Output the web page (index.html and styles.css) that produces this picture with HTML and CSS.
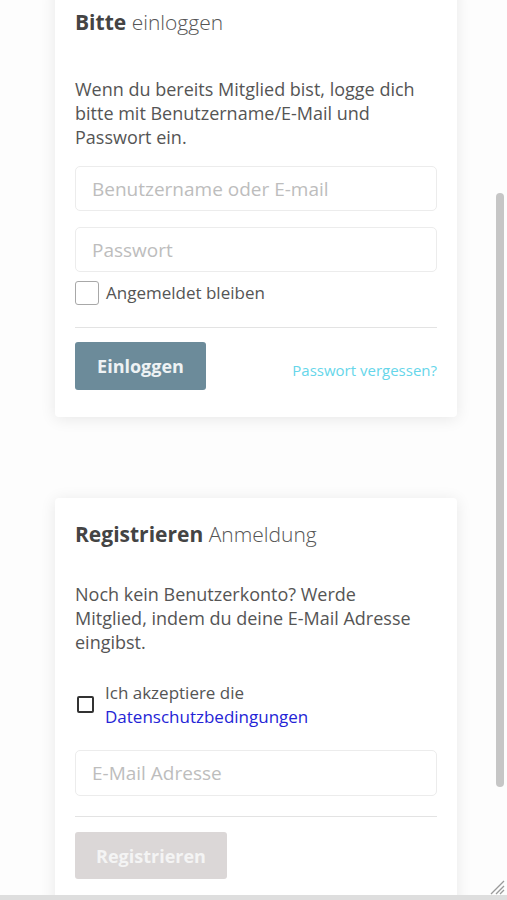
FILE: index.html
```html
<!DOCTYPE html>
<html lang="de">
<head>
<meta charset="utf-8">
<title>Login</title>
<link rel="stylesheet" href="styles.css">
</head>
<body>
<main class="page">
  <section class="card card-login">
    <h2 class="card-title"><strong>Bitte</strong> einloggen</h2>
    <p class="card-text">Wenn du bereits Mitglied bist, logge dich bitte mit Benutzername/E-Mail und Passwort ein.</p>
    <input class="field" type="text" placeholder="Benutzername oder E-mail">
    <input class="field" type="password" placeholder="Passwort">
    <label class="remember">
      <span class="box"></span>
      <span>Angemeldet bleiben</span>
    </label>
    <hr class="divider">
    <div class="actions">
      <button class="btn btn-primary" type="button">Einloggen</button>
      <a class="forgot" href="#">Passwort vergessen?</a>
    </div>
  </section>

  <section class="card card-register">
    <h2 class="card-title"><strong>Registrieren</strong> Anmeldung</h2>
    <p class="card-text text-register">Noch kein Benutzerkonto? Werde Mitglied, indem du deine E-Mail Adresse eingibst.</p>
    <label class="accept">
      <span class="box-small"></span>
      <span class="accept-text">Ich akzeptiere die<br><a href="#" class="privacy">Datenschutzbedingungen</a></span>
    </label>
    <input class="field field-email" type="email" placeholder="E-Mail Adresse">
    <hr class="divider divider-register">
    <button class="btn btn-disabled" type="button">Registrieren</button>
  </section>
</main>

<div class="scroll-thumb"></div>
<svg class="resize" width="18" height="18" viewBox="0 0 18 18">
  <path d="M17 4 L4 17 M17 9 L9 17 M17 13 L13 17" stroke="#9a9a9a" stroke-width="1.3" fill="none"/>
</svg>
<div class="bottom-strip"></div>
</body>
</html>
```

FILE: styles.css
```css
html, body {
  margin: 0;
  padding: 0;
  height: 100%;
  overflow: hidden;
}

body {
  background: #fdfdfd;
  font-family: "Open Sans", "Liberation Sans", sans-serif;
  color: #555;
}

.page {
  display: flex;
  flex-direction: column;
  padding-left: 55px;
  width: 402px;
}

.card {
  background: #fff;
  border-radius: 4px;
  box-shadow: 0 2px 16px rgba(0, 0, 0, 0.09);
  padding: 22px 20px 27px 20px;
  display: flex;
  flex-direction: column;
}

.card-login {
  margin-top: -14px;
}

.card-register {
  margin-top: 81px;
  padding-bottom: 40px;
}

.card-title {
  margin: 0;
  font-size: 21px;
  line-height: 28px;
  font-weight: 300;
  color: #555;
}

.card-title strong {
  font-weight: 700;
  color: #444;
}

.card-text {
  margin: 41px 0 0 0;
  font-size: 18px;
  line-height: 24px;
  color: #555;
}

.text-register {
  margin-top: 34px;
  max-width: 340px;
}

.field {
  box-sizing: border-box;
  height: 45px;
  margin-top: 17px;
  width: 100%;
  border: 1px solid #ececec;
  border-radius: 5px;
  padding: 0 16px;
  font-family: inherit;
  font-size: 19px;
  color: #555;
  background: #fff;
  outline: none;
}

.field + .field {
  margin-top: 16px;
}

.field::placeholder {
  color: #bdbdbd;
}

.remember {
  display: flex;
  align-items: center;
  gap: 7px;
  margin-top: 9px;
  font-size: 17px;
  line-height: 24px;
  color: #555;
}

.box {
  box-sizing: border-box;
  width: 24px;
  height: 24px;
  border: 1.5px solid #a8a8a8;
  border-radius: 3px;
  background: #fff;
}

.divider {
  border: 0;
  border-top: 1px solid #e3e3e3;
  margin: 22px 0 0 0;
}

.actions {
  display: flex;
  justify-content: space-between;
  align-items: center;
  margin-top: 14px;
}

.btn {
  border: 0;
  border-radius: 3px;
  font-family: inherit;
  font-weight: 700;
  font-size: 18px;
  height: 48px;
  padding: 0 10px;
  cursor: pointer;
}

.btn-primary {
  background: #6c8b9a;
  color: #eef2f4;
  width: 131px;
}

.forgot {
  font-size: 15px;
  color: #66d6ea;
  text-decoration: none;
  padding-top: 8px;
}

.accept {
  display: flex;
  align-items: flex-start;
  gap: 11px;
  margin-top: 27px;
  font-size: 17px;
  line-height: 24px;
  color: #555;
}

.box-small {
  box-sizing: border-box;
  width: 17px;
  height: 17px;
  border: 2px solid #333;
  border-radius: 2px;
  margin-left: 2px;
  margin-top: 15px;
  flex: none;
}

.privacy {
  color: #2424d6;
  text-decoration: none;
}

.field.field-email {
  margin-top: 21px;
  height: 46px;
}

.divider-register {
  margin-top: 20px;
}

.btn-disabled {
  align-self: flex-start;
  margin-top: 15px;
  width: 152px;
  height: 47px;
  background: #dbd7d7;
  color: #f4f4f4;
}

.scroll-thumb {
  position: fixed;
  left: 496px;
  top: 193px;
  width: 8px;
  height: 594px;
  border-radius: 4px;
  background: #c6c6c6;
}

.resize {
  position: fixed;
  left: 487px;
  top: 877px;
}

.bottom-strip {
  position: fixed;
  left: 0;
  right: 0;
  bottom: 0;
  height: 5px;
  background: #dedede;
}
```
